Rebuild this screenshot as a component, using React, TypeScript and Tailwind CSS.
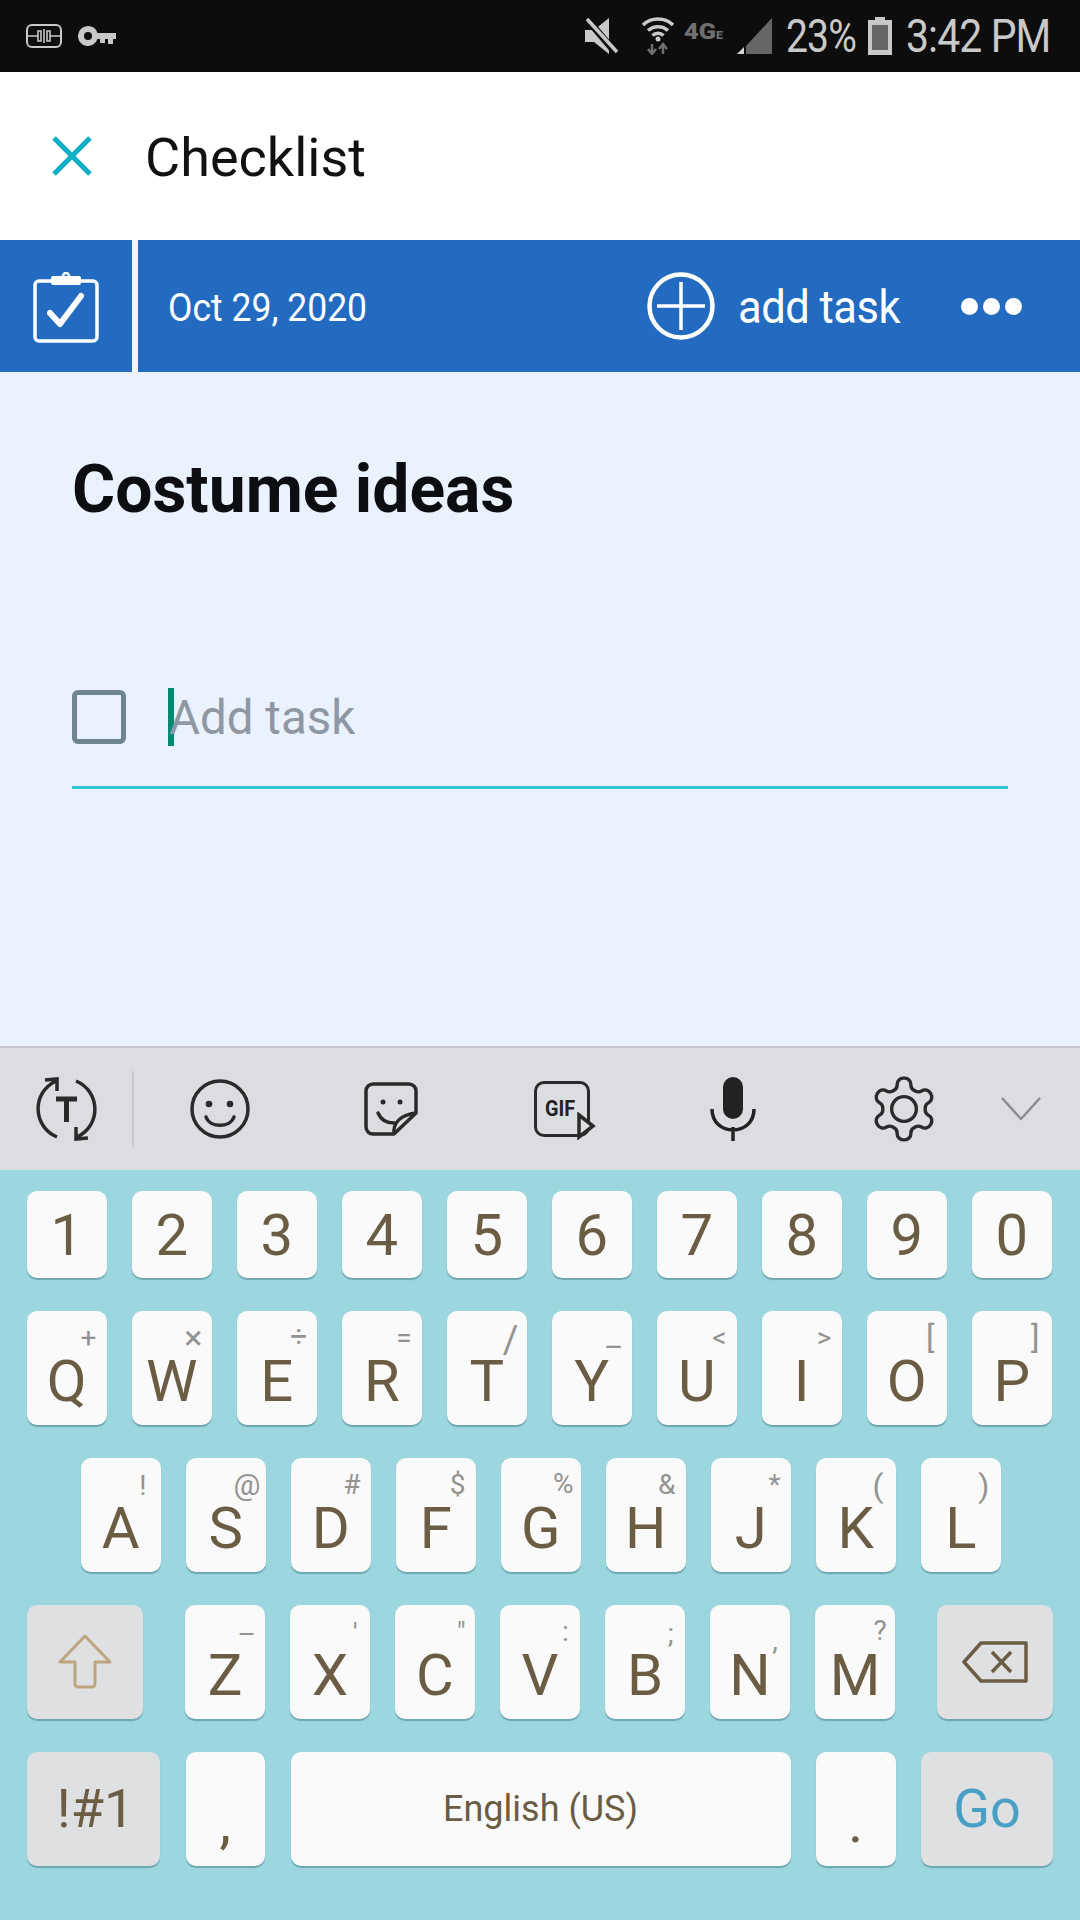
import { X } from 'lucide-react'

const NUMS = ['1', '2', '3', '4', '5', '6', '7', '8', '9', '0']

interface KeyProps {
  label: string
  sub?: string
  subClass?: string
}

function Key({ label, sub, subClass = 'top-[13px] right-[10px]' }: KeyProps) {
  return (
    <div className="relative w-[79.5px] h-[114px] shrink-0 rounded-[10px] bg-[#fafafa] shadow-[0_2px_1px_#6ea7b3] flex items-center justify-center pt-[26px] text-[58px] leading-none text-[#6b5c44]">
      {label}
      {sub && <span className={`absolute text-[28px] leading-none text-[#939393] ${subClass}`}>{sub}</span>}
    </div>
  )
}

function StatusBar() {
  return (
    <div className="h-[72px] shrink-0 bg-[#0d0d0d] flex items-center pl-[26px] text-[#c9c9c9]">
      <svg width="36" height="24" viewBox="0 0 36 24" fill="none" stroke="#c9c9c9" strokeWidth="2">
        <rect x="1" y="1" width="34" height="22" rx="5" />
        <path d="M1 12h11M24 12h11M15 7h-3v10h3zM21 7h3v10h-3zM18 5v14" strokeWidth="1.6" />
      </svg>
      <svg className="ml-[16px]" width="38" height="24" viewBox="0 0 38 24" fill="#c9c9c9">
        <path fillRule="evenodd" d="M10 2a10 10 0 0 1 9.500 7H38v6h-3v5h-5v-5h-3v4h-5v-4h-2.500A10 10 0 1 1 10 2zm0 6a4 4 0 1 0 0 8 4 4 0 0 0 0-8z" />
      </svg>
      <svg className="ml-[467px]" width="36" height="38" viewBox="0 0 36 38">
        <path d="M2 13h9l15-12v36L11 25H2z" fill="#c9c9c9" />
        <path d="M3 1l30 35" stroke="#0d0d0d" strokeWidth="7" />
        <path d="M4 2l30 33" stroke="#c9c9c9" strokeWidth="3.500" />
      </svg>
      <svg className="ml-[23px]" width="32" height="38" viewBox="0 0 32 38" fill="none">
        <path d="M1 8a22 22 0 0 1 30 0M6 13.500a15 15 0 0 1 20 0M10.500 18.500a8 8 0 0 1 11 0" stroke="#c9c9c9" strokeWidth="3.500" />
        <circle cx="16" cy="22" r="2.500" fill="#c9c9c9" />
        <path d="M10 27v10M6 32l4 5 4-5M21 37V27M17 32l4-5 4 5" stroke="#6f6f6f" strokeWidth="2.500" />
      </svg>
      <span className="ml-[10px] w-[41px] mb-[8px] origin-left scale-x-[1.15] whitespace-nowrap text-[22px] font-black leading-none text-[#6f6f6f]">
        4G<span className="text-[11px]">E</span>
      </span>
      <svg className="ml-[12px]" width="35" height="36" viewBox="0 0 35 36">
        <path d="M35 0v36H9V28z" fill="#666" />
        <path d="M7 29v7H0z" fill="#d8d8d8" />
      </svg>
      <span className="ml-[14px] w-[70px] origin-left scale-x-[0.85] whitespace-nowrap text-[46px] leading-none tracking-[-1px]">23%</span>
      <svg className="ml-[12px]" width="24" height="38" viewBox="0 0 24 38">
        <path d="M7 0h10v3h7v35H0V3h7z" fill="#c9c9c9" />
        <rect x="4" y="8" width="16" height="25" fill="#666" />
      </svg>
      <span className="ml-[14px] w-[144px] origin-left scale-x-[0.89] whitespace-nowrap text-[46px] leading-none tracking-[-1px]">3:42 PM</span>
    </div>
  )
}

function Header() {
  return (
    <div className="h-[168px] shrink-0 bg-white flex items-center pl-[36px]">
      <X className="w-[72px] h-[72px] text-[#10b1c7]" strokeWidth={1.7} strokeLinecap="butt" />
      <span className="ml-[37px] pt-[4px] text-[54px] leading-none text-[#111]">Checklist</span>
    </div>
  )
}

function ActionBar() {
  return (
    <div className="h-[132px] shrink-0 bg-[#236bc1] flex items-center text-white">
      <div className="w-[132px] h-full pt-[3px] flex items-center justify-center">
        <svg width="66" height="72" viewBox="0 0 66 72" fill="none" stroke="#fff">
          <rect x="2" y="9" width="62" height="60" rx="4" strokeWidth="3.500" />
          <rect x="19" y="5" width="28" height="7" rx="1" fill="#fff" strokeWidth="2" />
          <circle cx="33" cy="4" r="3" strokeWidth="2.500" />
          <path d="M17 41l10 11 21-28" strokeWidth="6" strokeLinecap="round" strokeLinejoin="round" />
        </svg>
      </div>
      <div className="w-[6px] h-full bg-[#f2f6fc]" />
      <span className="ml-[30px] w-[198px] pt-[3px] origin-left scale-x-[0.935] whitespace-nowrap text-[38px] leading-none">Oct 29, 2020</span>
      <svg className="ml-[281px]" width="68" height="68" viewBox="0 0 68 68" fill="none" stroke="#fff">
        <circle cx="34" cy="34" r="31.500" strokeWidth="4.500" />
        <path d="M34 10v48M10 34h48" strokeWidth="3.500" />
      </svg>
      <span className="ml-[23px] w-[161px] pt-[2px] origin-left scale-x-[0.945] whitespace-nowrap text-[46px] leading-none tracking-[-0.5px]">add task</span>
      <div className="ml-[62px] flex gap-[5px]">
        <div className="w-[17px] h-[17px] rounded-full bg-white" />
        <div className="w-[17px] h-[17px] rounded-full bg-white" />
        <div className="w-[17px] h-[17px] rounded-full bg-white" />
      </div>
    </div>
  )
}

function Body() {
  return (
    <div className="flex-1 bg-[#e9f2fe] px-[72px] pt-[85px]">
      <h1 className="text-[66px] leading-none font-bold text-[#0c0e12]">Costume ideas</h1>
      <div className="w-[936px] h-[101px] mt-[165px] border-b-[3px] border-[#2fc6d8] flex items-start">
        <div className="w-[54px] h-[54px] mt-[2px] border-[5px] border-[#6f8590] rounded-[6px]" />
        <div className="w-[6px] h-[58px] ml-[42px] bg-[#008a73]" />
        <span className="ml-[-5px] mt-[3px] text-[47.5px] leading-[54px] text-[#8f97a3]">Add task</span>
      </div>
    </div>
  )
}

function Toolbar() {
  return (
    <div className="h-[124px] shrink-0 bg-[#dcdde0] border-t-2 border-[#c4c5c8] flex items-center text-[#222]">
      <div className="w-[134px] h-[76px] border-r-2 border-[#c8c9cc] flex items-center justify-center">
        <svg width="64" height="64" viewBox="0 0 64 64" fill="none" stroke="#2a2a2a" strokeWidth="3.500">
          <path d="M23 60C-1 50-3 16 22 4M11 3l12-1v12M42 4c24 10 26 44 1 56M54 61l-12 1V50" />
          <path d="M22 22h21M32.500 22v23" strokeWidth="5" />
        </svg>
      </div>
      <div className="w-[171px] flex justify-center">
        <svg width="60" height="60" viewBox="0 0 60 60" fill="none" stroke="#2a2a2a" strokeWidth="3.500">
          <circle cx="30" cy="30" r="28" />
          <circle cx="19" cy="25" r="3.300" fill="#2a2a2a" stroke="none" />
          <circle cx="40" cy="25" r="3.300" fill="#2a2a2a" stroke="none" />
          <path d="M16 38c4 11 24 11 28 0" strokeLinecap="round" />
        </svg>
      </div>
      <div className="w-[171px] flex justify-center">
        <svg width="54" height="54" viewBox="0 0 54 54" fill="none" stroke="#2a2a2a" strokeWidth="3.500" strokeLinejoin="round">
          <path d="M30 52H9a7 7 0 0 1-7-7V9a7 7 0 0 1 7-7h36a7 7 0 0 1 7 7v22L30 52z" />
          <path d="M30 52c-1-11 6-19 22-21" />
          <path d="M14 31c3 7 9 10 16 10" strokeLinecap="round" />
          <circle cx="19" cy="20" r="2.500" fill="#2a2a2a" stroke="none" />
          <circle cx="36" cy="20" r="2.500" fill="#2a2a2a" stroke="none" />
        </svg>
      </div>
      <div className="w-[171px] flex justify-center">
        <div className="relative w-[56px] h-[56px] border-[3.5px] border-[#2a2a2a] rounded-[10px] flex items-center pl-[8px] leading-none">
          <span className="origin-left scale-x-[0.9] text-[22px] font-bold">GIF</span>
          <svg className="absolute right-[-9px] bottom-[-6px]" width="20" height="28" viewBox="0 0 20 28">
            <path d="M3 3l14 11L3 25z" fill="#dcdde0" stroke="#2a2a2a" strokeWidth="3.500" />
          </svg>
        </div>
      </div>
      <div className="w-[171px] flex justify-center">
        <svg width="46" height="64" viewBox="0 0 46 64" fill="none" stroke="#222" strokeWidth="3.500">
          <rect x="13" y="0" width="20" height="42" rx="10" fill="#222" stroke="none" />
          <path d="M2 32c0 28 42 28 42 0M23 50v14" />
        </svg>
      </div>
      <div className="w-[171px] flex justify-center">
        <svg width="74" height="74" viewBox="0 0 24 24" fill="none" stroke="#2a2a2a" strokeWidth="1.100" strokeLinejoin="round">
          <path d="M12.220 2h-.44a2 2 0 0 0-2 2v.18a2 2 0 0 1-1 1.730l-.43.250a2 2 0 0 1-2 0l-.15-.08a2 2 0 0 0-2.730.730l-.22.380a2 2 0 0 0 .730 2.730l.15.100a2 2 0 0 1 1 1.720v.510a2 2 0 0 1-1 1.740l-.15.090a2 2 0 0 0-.730 2.730l.22.380a2 2 0 0 0 2.730.730l.15-.08a2 2 0 0 1 2 0l.43.250a2 2 0 0 1 1 1.730V20a2 2 0 0 0 2 2h.44a2 2 0 0 0 2-2v-.18a2 2 0 0 1 1-1.730l.43-.250a2 2 0 0 1 2 0l.15.080a2 2 0 0 0 2.730-.730l.22-.390a2 2 0 0 0-.730-2.730l-.15-.080a2 2 0 0 1-1-1.740v-.500a2 2 0 0 1 1-1.740l.15-.090a2 2 0 0 0 .730-2.730l-.22-.380a2 2 0 0 0-2.730-.730l-.15.080a2 2 0 0 1-2 0l-.43-.250a2 2 0 0 1-1-1.730V4a2 2 0 0 0-2-2z" />
          <circle cx="12" cy="12" r="4" />
        </svg>
      </div>
      <div className="w-[64px] flex justify-center">
        <svg width="40" height="24" viewBox="0 0 40 24" fill="none" stroke="#8b8c8f" strokeWidth="2.500">
          <path d="M1 1l19 21L39 1" />
        </svg>
      </div>
    </div>
  )
}

function Keyboard() {
  return (
    <div className="h-[750px] shrink-0 bg-[#9cd6df] px-[27px] pt-[21px] flex flex-col gap-[33px]">
      <div className="flex gap-[25.5px]">
        {NUMS.map(n => (
          <div key={n} className="w-[79.5px] h-[87px] shrink-0 rounded-[10px] bg-[#fafafa] shadow-[0_2px_1px_#6ea7b3] flex items-center justify-center text-[58px] leading-none text-[#6b5c44]">
            {n}
          </div>
        ))}
      </div>

      <div className="flex gap-[25.5px]">
        <Key label="Q" sub="+" />
        <Key label="W" sub="×" subClass="top-[9px] right-[9px] text-[34px]" />
        <Key label="E" sub="÷" subClass="top-[11px] right-[9px] text-[30px]" />
        <Key label="R" sub="=" />
        <Key label="T" sub="/" subClass="top-[10px] right-[8px] text-[38px]" />
        <Key label="Y" sub="–" subClass="top-[21px] right-[8px] text-[30px]" />
        <Key label="U" sub="<" />
        <Key label="I" sub=">" />
        <Key label="O" sub="[" subClass="top-[10px] right-[12px] text-[32px]" />
        <Key label="P" sub="]" subClass="top-[10px] right-[12px] text-[32px]" />
      </div>

      <div className="flex gap-[25.5px] pl-[54px]">
        <Key label="A" sub="!" subClass="top-[14px] right-[14px]" />
        <Key label="S" sub="@" subClass="top-[12px] right-[5px] text-[30px]" />
        <Key label="D" sub="#" />
        <Key label="F" sub="$" />
        <Key label="G" sub="%" subClass="top-[12px] right-[7px]" />
        <Key label="H" sub="&" />
        <Key label="J" sub="*" />
        <Key label="K" sub="(" subClass="top-[12px] right-[12px] text-[32px]" />
        <Key label="L" sub=")" subClass="top-[12px] right-[11px] text-[32px]" />
      </div>

      <div className="flex justify-between">
        <div className="w-[116px] h-[114px] rounded-[10px] bg-[#dfe0e2] shadow-[0_2px_1px_#6ea7b3] flex items-center justify-center">
          <svg width="54" height="56" viewBox="0 0 54 56" fill="none" stroke="#bda57f" strokeWidth="3" strokeLinejoin="round">
            <path d="M27 2L2 28h15v22a3 3 0 0 0 3 3h14a3 3 0 0 0 3-3V28h15z" />
          </svg>
        </div>
        <div className="flex gap-[25.5px]">
          <Key label="Z" sub="–" subClass="top-[16px] right-[9px]" />
          <Key label="X" sub="'" subClass="top-[15px] right-[12px] text-[20px]" />
          <Key label="C" sub={'"'} subClass="top-[14px] right-[9px] text-[20px]" />
          <Key label="V" sub=":" subClass="top-[13px] right-[11px]" />
          <Key label="B" sub=";" subClass="top-[15px] right-[11px]" />
          <Key label="N" sub="," subClass="top-[22px] right-[12px]" />
          <Key label="M" sub="?" subClass="top-[12px] right-[8px]" />
        </div>
        <div className="w-[116px] h-[114px] rounded-[10px] bg-[#dfe0e2] shadow-[0_2px_1px_#6ea7b3] flex items-center justify-center">
          <svg width="66" height="42" viewBox="0 0 66 42" fill="none" stroke="#6b5c44" strokeWidth="3.500">
            <path d="M19 2h45v38H19L2 21z" strokeLinejoin="round" />
            <path d="M30 11l19 20M49 11L30 31" />
          </svg>
        </div>
      </div>

      <div className="flex gap-[25.5px]">
        <div className="w-[133px] h-[114px] pl-[4px] rounded-[10px] bg-[#dfe0e2] shadow-[0_2px_1px_#6ea7b3] flex items-center justify-center text-[54px] leading-none text-[#6b5c44]">
          !#1
        </div>
        <Key label="," />
        <div className="w-[500px] h-[114px] rounded-[10px] bg-[#fafafa] shadow-[0_2px_1px_#6ea7b3] flex items-center justify-center text-[36px] leading-none text-[#6b5c44]">
          English (US)
        </div>
        <Key label="." />
        <div className="w-[132px] h-[114px] rounded-[10px] bg-[#dfe0e2] shadow-[0_2px_1px_#6ea7b3] flex items-center justify-center text-[54px] leading-none text-[#4a9fc7]">
          Go
        </div>
      </div>
    </div>
  )
}

export default function App() {
  return (
    <div className="w-[1080px] h-[1920px] flex flex-col overflow-hidden font-['Roboto',sans-serif]">
      <StatusBar />
      <Header />
      <ActionBar />
      <Body />
      <Toolbar />
      <Keyboard />
    </div>
  )
}
